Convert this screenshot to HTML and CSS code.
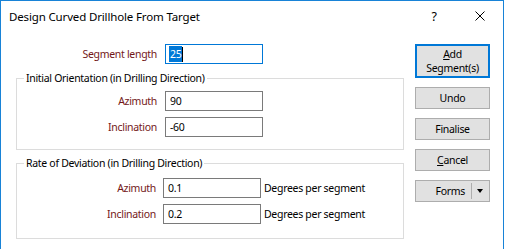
FILE: index.html
```html
<!DOCTYPE html>
<html lang="en">
<head>
    <meta charset="UTF-8">
    <title>Design Curved Drillhole From Target</title>
    <link rel="stylesheet" href="styles.css">
</head>
<body>

<!--对话框窗口-->
<div class="window">
    <!--标题栏-->
    <div class="titlebar">
        <span class="title">Design Curved Drillhole From Target</span>
        <span class="tb-btn">?</span>
        <span class="tb-btn">
            <svg width="10" height="10" viewBox="0 0 10 10">
                <path d="M0.5 0.5 L9.5 9.5 M9.5 0.5 L0.5 9.5" stroke="#000" stroke-width="1" fill="none"/>
            </svg>
        </span>
    </div>

    <div class="content">
        <!--左侧表单-->
        <div class="form">
            <div class="row seg-row">
                <label class="lbl">Segment length</label>
                <div class="field focus"><span class="sel">25</span><span class="caret"></span></div>
            </div>

            <fieldset class="group group1">
                <legend>Initial Orientation (in Drilling Direction)</legend>
                <div class="group-body">
                    <div class="row">
                        <label class="lbl">Azimuth</label>
                        <div class="field">90</div>
                    </div>
                    <div class="row">
                        <label class="lbl">Inclination</label>
                        <div class="field">-60</div>
                    </div>
                </div>
            </fieldset>

            <fieldset class="group group2">
                <legend>Rate of Deviation (in Drilling Direction)</legend>
                <div class="group-body">
                    <div class="row">
                        <label class="lbl">Azimuth</label>
                        <div class="field">0.1</div>
                        <span class="unit">Degrees per segment</span>
                    </div>
                    <div class="row">
                        <label class="lbl">Inclination</label>
                        <div class="field">0.2</div>
                        <span class="unit">Degrees per segment</span>
                    </div>
                </div>
            </fieldset>
        </div>

        <!--右侧按钮-->
        <div class="buttons">
            <button class="btn btn-default"><u>A</u>dd<br>Segment(s)</button>
            <button class="btn">Undo</button>
            <button class="btn">Finalise</button>
            <button class="btn"><u>C</u>ancel</button>
            <button class="btn btn-split">
                <span class="split-text">Forms</span>
                <span class="split-sep"></span>
                <span class="split-arrow"></span>
            </button>
        </div>
    </div>
</div>

</body>
</html>
```

FILE: styles.css
```css
* {
    margin: 0;
    padding: 0;
    box-sizing: border-box;
}

body {
    font-family: "Noto Sans", "Open Sans", sans-serif;
    font-size: 10.5px;
    letter-spacing: -0.3px;
    color: #000;
    background-color: #fff;
}

/*窗口*/
.window {
    width: 504px;
    height: 249px;
    border: 1px solid #1883d7;
    border-bottom: 0;
    background-color: #fff;
}

/*标题栏*/
.titlebar {
    display: flex;
    align-items: center;
    height: 30px;
    padding-left: 8px;
}

.title {
    flex: 1;
    font-size: 11.5px;
    letter-spacing: -0.15px;
}

.tb-btn {
    display: flex;
    align-items: center;
    justify-content: center;
    width: 46px;
    height: 30px;
    font-size: 12.5px;
}

/*内容区*/
.content {
    display: flex;
    padding: 13px 0 0 15px;
    gap: 11px;
}

.form {
    width: 388px;
}

.row {
    display: grid;
    grid-template-columns: 140px 98px auto;
    column-gap: 8px;
    align-items: center;
}

.seg-row {
    grid-template-columns: 141px 98px;
}

.lbl {
    text-align: right;
    color: #731818;
}

/*输入框*/
.field {
    height: 20px;
    border: 1px solid #7a7a7a;
    padding-left: 4px;
    line-height: 18px;
    display: flex;
    align-items: center;
}

.field.focus {
    border-color: #0078d7;
    padding-left: 3px;
}

.sel {
    background-color: #0078d7;
    color: #fff;
    line-height: 16px;
    padding: 0 1px;
}

.caret {
    width: 1px;
    height: 15px;
    background-color: #000;
}

.unit {
    margin-left: -4px;
}

/*分组框*/
.group {
    border: 1px solid #dcdcdc;
    min-width: 0;
}

.group legend {
    margin-left: 7px;
    padding: 0 2px;
    line-height: 16px;
}

.group1 {
    margin-top: 6px;
}

.group1 .group-body {
    padding: 5px 0 12px 0;
}

.group2 {
    margin-top: 5px;
}

.group2 .row {
    grid-template-columns: 139px 98px auto;
    column-gap: 7px;
}

.group2 .group-body {
    padding: 7px 0 14px 0;
}

.group-body .row + .row {
    margin-top: 6px;
}

/*按钮*/
.buttons {
    display: flex;
    flex-direction: column;
    gap: 9px;
    width: 75px;
}

.btn {
    height: 22px;
    font-family: inherit;
    font-size: 10.5px;
    letter-spacing: -0.3px;
    color: #000;
    background-color: #e1e1e1;
    border: 1px solid #adadad;
    line-height: 14px;
}

.btn-default {
    height: 34px;
    border: 2px solid #0078d7;
    line-height: 14px;
}

.btn-split {
    display: flex;
    align-items: center;
    justify-content: flex-end;
}

.split-text {
    margin-right: 6px;
}

.split-sep {
    width: 1px;
    height: 16px;
    background-color: #adadad;
}

.split-arrow {
    width: 17px;
    height: 20px;
    position: relative;
}

/*下拉箭头*/
.split-arrow::after {
    content: "";
    position: absolute;
    left: 5px;
    top: 8px;
    border-left: 3.5px solid transparent;
    border-right: 3.5px solid transparent;
    border-top: 4px solid #000;
}
```
